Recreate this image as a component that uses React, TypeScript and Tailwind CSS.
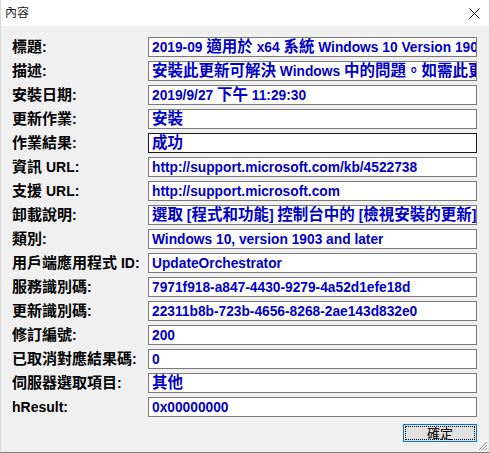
import React from "react";

const rows: { label: string; value: string; focus?: boolean }[] = [
  { label: "標題:", value: "2019-09 適用於 x64 系統 Windows 10 Version 1903 的累積更新" },
  { label: "描述:", value: "安裝此更新可解決 Windows 中的問題。如需此更新的完整清單" },
  { label: "安裝日期:", value: "2019/9/27 下午 11:29:30" },
  { label: "更新作業:", value: "安裝" },
  { label: "作業結果:", value: "成功", focus: true },
  { label: "資訊 URL:", value: "http://support.microsoft.com/kb/4522738" },
  { label: "支援 URL:", value: "http://support.microsoft.com" },
  { label: "卸載說明:", value: "選取 [程式和功能] 控制台中的 [檢視安裝的更新]，再選取更新" },
  { label: "類別:", value: "Windows 10, version 1903 and later" },
  { label: "用戶端應用程式 ID:", value: "UpdateOrchestrator" },
  { label: "服務識別碼:", value: "7971f918-a847-4430-9279-4a52d1efe18d" },
  { label: "更新識別碼:", value: "22311b8b-723b-4656-8268-2ae143d832e0" },
  { label: "修訂編號:", value: "200" },
  { label: "已取消對應結果碼:", value: "0" },
  { label: "伺服器選取項目:", value: "其他" },
  { label: "hResult:", value: "0x00000000" },
];

function Runs({ text, value }: { text: string; value?: boolean }) {
  const parts = text.split(/([\u3000-\u9fff\uff00-\uffef]+)/);
  return (
    <span className="whitespace-pre">
      {parts.map((p, i) =>
        /[\u3000-\u9fff\uff00-\uffef]/.test(p) ? (
          <span key={i} className={value ? "text-[15.5px]" : "text-[15px]"}>
            {p}
          </span>
        ) : (
          <span key={i} className={value ? "text-[13.75px]" : "text-[14px]"}>
            {p}
          </span>
        )
      )}
    </span>
  );
}

export default function App() {
  return (
    <div
      className="relative w-[490px] h-[453px] flex flex-col bg-[#f0f0f0] border-b border-r border-l border-b-[#7a7a7a] border-r-[#d0d0d0] border-l-[#d8d8d8] overflow-hidden"
      style={{ fontFamily: '"Liberation Sans", "Noto Sans CJK TC", sans-serif' }}
    >
      <div className="h-[26px] shrink-0 bg-white flex items-center justify-between pl-[4px] pr-[9px]">
        <span className="text-[12px] text-[#222] leading-none">內容</span>
        <svg width="11" height="11" viewBox="0 0 11 11">
          <path d="M0.5 0.5 L10.5 10.5 M10.5 0.5 L0.5 10.5" stroke="#111" strokeWidth="1" />
        </svg>
      </div>
      <div className="flex-1 flex flex-col pt-[11px] pl-[11px]">
        <div className="grid grid-cols-[136px_329px] gap-y-[4px]">
          {rows.map((r) => (
            <React.Fragment key={r.label}>
              <div className="h-[20px] flex items-center font-bold text-black whitespace-nowrap">
                <Runs text={r.label} />
              </div>
              <div
                className={
                  "h-[20px] bg-white border flex items-center pl-[3px] overflow-hidden whitespace-nowrap font-bold text-[#0000c8] " +
                  (r.focus ? "border-[#1a1a1a]" : "border-[#7a7a7a]")
                }
              >
                <Runs text={r.value} value />
              </div>
            </React.Fragment>
          ))}
        </div>
        <div className="flex justify-end w-[465px] mt-[7px]">
          <button className="w-[74px] h-[18px] bg-[#e1e1e1] border border-[#0078d7] p-[1px] flex">
            <span className="flex-1 border border-dotted border-black flex items-center justify-center text-[13px] text-black leading-none">
              確定
            </span>
          </button>
        </div>
      </div>
      <svg width="12" height="12" viewBox="0 0 12 12" className="absolute right-[1px] bottom-[1px]">
        <path d="M11 3 L3 11 M11 6 L6 11 M11 9 L9 11" stroke="#a0a0a0" strokeWidth="1" />
      </svg>
    </div>
  );
}
